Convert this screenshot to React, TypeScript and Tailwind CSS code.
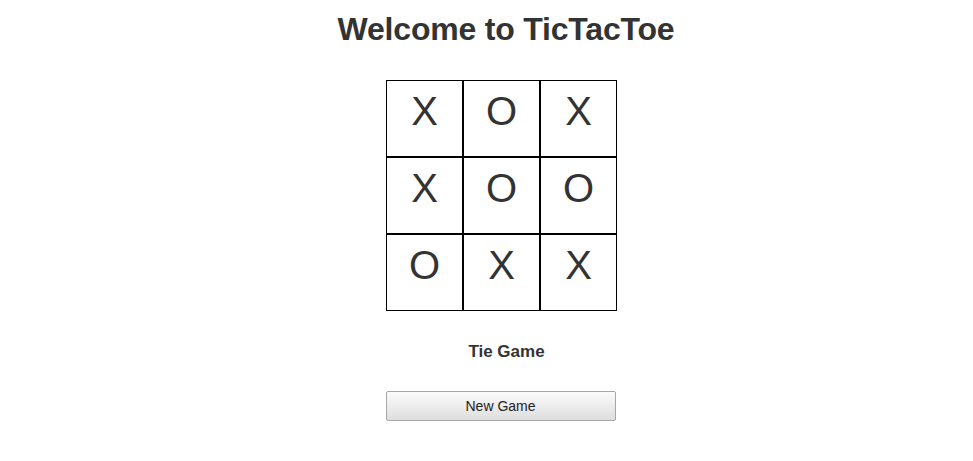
import React from "react";

const board = [
  ["X", "O", "X"],
  ["X", "O", "O"],
  ["O", "X", "X"],
];

export default function App() {
  return (
    <div
      className="w-full min-h-[461px] bg-white text-[#333] flex flex-col items-center pl-[30px]"
      style={{ fontFamily: '"Liberation Sans", Arial, sans-serif' }}
    >
      <h1 className="mt-[11px] ml-[9px] text-[32px] leading-[37px] font-bold tracking-[-0.2px] text-[#333]">
        Welcome to TicTacToe
      </h1>
      <div className="mt-[32px] grid grid-cols-3 w-[231px]">
        {board.flat().map((v, i) => (
          <div
            key={i}
            className="h-[77px] w-[77px] border border-black flex justify-center pt-[7px] text-[40px] leading-[46px] text-[#333]"
          >
            {v}
          </div>
        ))}
      </div>
      <div className="mt-[31px] ml-[10px] text-[17px] leading-[20px] font-bold text-[#333]">
        Tie Game
      </div>
      <button className="mt-[29px] mr-[2px] w-[230px] h-[30px] border border-[#a6a6a6] rounded-[2px] bg-gradient-to-b from-[#fbfbfb] to-[#dedede] text-[14px] text-[#222] flex items-center justify-center">
        New Game
      </button>
    </div>
  );
}
